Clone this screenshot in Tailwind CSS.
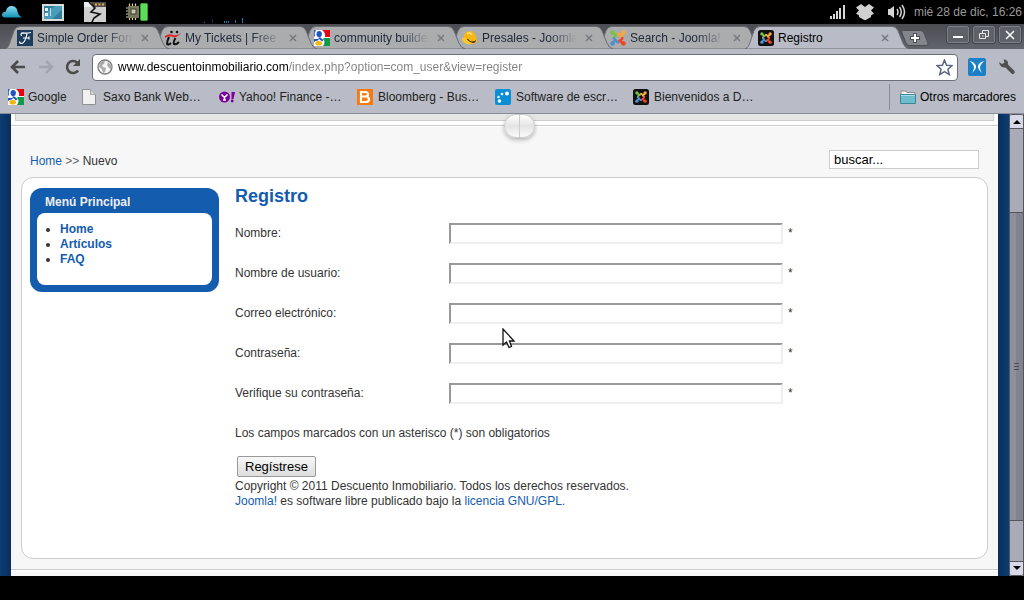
<!DOCTYPE html>
<html lang="es">
<head>
  <meta charset="UTF-8" />
  <meta name="viewport" content="width=device-width, initial-scale=1" />
  <title>Registro</title>
  <script src="https://cdn.jsdelivr.net/npm/@tailwindcss/browser@4"></script>
  <style>
    body {
      font-family: 'Liberation Sans', Arial, sans-serif;
    }
  </style>
</head>
<body class="h-screen flex flex-col overflow-hidden bg-black text-xs text-[#333]">

  <!-- Shared shapes -->
  <svg class="hidden">
    <symbol id="tab" viewBox="0 0 164 24" preserveAspectRatio="none">
      <path d="M0 24C3 23 4 20 5 17L9 5Q11 .5 15 .5H147Q151 .5 153 5L158 18Q160 23 164 24Z" />
    </symbol>
    <symbol id="google" viewBox="0 0 16 16">
      <rect width="16" height="16" fill="#fff" />
      <path d="M8 0H16V7H11Q12 3 8 0Z" fill="#e60012" />
      <path d="M10 8H16V16H9Q12 12 9 9Z" fill="#109a48" />
      <path d="M0 0H2Q0 3 1 6L0 7Z" fill="#2c63c8" />
      <path d="M0 9H5L4 10.500Q1 10.500 0 12Z" fill="#1f55b5" />
      <ellipse cx="5.200" cy="4" rx="2.700" ry="3.100" fill="#1e56c4" />
      <path d="M4 8Q6 6.500 7 8L9.500 10L8 11.500Z" fill="#1e56c4" />
      <ellipse cx="4.700" cy="13.300" rx="3.300" ry="2.300" fill="#f5b50f" />
    </symbol>
    <symbol id="joomla" viewBox="0 0 16 16">
      <g fill="none" stroke-width="2.500">
        <path d="M2.500 3L5.500 4.500M3.500 9L4 7L8.500 3.500" stroke="#7ac143" />
        <path d="M13 3L11.500 5.500M7 3.500L9 4L12.500 8.500" stroke="#f9a541" />
        <path d="M13 13L10.500 11.500M12.500 7L12 9L7.500 12.500" stroke="#f44321" />
        <path d="M3 13L4.500 10.500M9 12.500L7 12L3.500 7.500" stroke="#5091cd" />
      </g>
      <circle cx="2.500" cy="2.500" r="2.200" fill="#7ac143" />
      <circle cx="13.500" cy="2.500" r="2.200" fill="#f9a541" />
      <circle cx="13.500" cy="13.500" r="2.200" fill="#f44321" />
      <circle cx="2.500" cy="13.500" r="2.200" fill="#5091cd" />
    </symbol>
    <symbol id="joomla-dark" viewBox="0 0 16 16">
      <rect width="16" height="16" rx="2.500" fill="#111" />
      <use href="#joomla" x="2" y="2" width="12" height="12" />
    </symbol>
    <symbol id="close" viewBox="0 0 8 8">
      <path d="M1 1L7 7M7 1L1 7" stroke="#77797f" stroke-width="1.500" />
    </symbol>
  </svg>

  <!-- Desktop panel -->
  <header class="h-6 shrink-0 flex items-center justify-between text-[#999]">
    <div class="flex items-center gap-5">
      <svg class="ml-0.5 w-5 h-5" viewBox="0 0 20 20">
        <defs><linearGradient id="cloud" x2="0" y2="1"><stop stop-color="#8fdcf2" /><stop offset="1" stop-color="#1493b8" /></linearGradient></defs>
        <path d="M3 15.500Q-1 15 0 12Q1 9.500 4 9.500Q4.500 4 10 4Q15 4.500 15.500 9.500Q16 13 20 15.500Z" fill="url(#cloud)" />
      </svg>
      <svg class="w-[22px] h-5" viewBox="0 0 22 20">
        <rect y="2" width="22" height="17" fill="#d9dcd8" />
        <rect x="2" y="4" width="18" height="13" fill="#2f7f9b" />
        <path d="M2 17V12L13 4H20V8L10 17Z" fill="#4a9db8" />
        <path d="M3 6h3v3H3zM3 11h3v3H3z" fill="#e6f1f4" />
        <path d="M8.500 6V14" stroke="#bcdce6" />
      </svg>
      <svg class="w-[22px] h-5" viewBox="0 0 22 20">
        <rect width="22" height="20" fill="#cfcfcf" />
        <rect width="22" height="5" fill="#4d4d4d" />
        <path d="M0 0H7L9 5H0Z" fill="#ececec" />
        <path d="M11 1.500h2v2h-2zM14.500 1.500h2v2h-2zM18 1.500h2v2h-2z" fill="#e3a83c" />
        <path d="M5 0L11 6L7 10L16 12L10 16L8 20" fill="none" stroke="#111" stroke-width="1.600" />
      </svg>
      <svg class="w-[22px] h-5" viewBox="0 0 22 20">
        <path d="M3.500 1.500V18M6.500 1.500V18M9.500 1.500V18M0 6H13M0 9H13M0 12H13M0 15H13" stroke="#d5cf9a" stroke-width="1.200" />
        <rect x="2" y="4" width="11" height="12" fill="#77775b" />
        <rect x="5" y="7" width="5" height="5" fill="#c8c8b0" stroke="#3e3e30" />
        <rect x="14.500" y="1.500" width="7" height="17" rx="1" fill="#62d95d" stroke="#2ba42b" />
      </svg>
      <svg class="ml-9 w-10 h-6" viewBox="0 0 40 24">
        <path d="M.5 22V23M20.500 21V23M22.500 21V23M24.500 21V23M31.500 20V23M38.500 18V23" stroke="#1b76ad" />
        <path d="M8.500 19V23" stroke="#0b3048" />
      </svg>
    </div>
    <div class="flex items-center pr-0.5">
      <svg class="w-4 h-4" viewBox="0 0 16 16">
        <path d="M0 12h2v3H0zM3 10h2v5H3zM6 7h2v8H6zM9 4h2v11H9zM13 1h2v14h-2z" fill="#d6d6d6" />
      </svg>
      <svg class="ml-2.5 w-[18px] h-4" viewBox="0 0 18 16">
        <path d="M5 0L9 3L13 0L18 3.500L15 6.500L18 9.500L15 11.500V13L9 16.500L3 13V11.500L0 9.500L3 6.500L0 3.500Z" fill="#d0d0d0" />
      </svg>
      <svg class="ml-3.5 w-[19px] h-4" viewBox="0 0 19 16">
        <path d="M0 5H2L6 2V14L2 11H0Z" fill="#d6d6d6" />
        <path d="M9 5Q11 8 9 11M11.500 3Q15 8 11.500 13M14 1Q19 8 14 15" fill="none" stroke="#d6d6d6" stroke-width="1.500" />
      </svg>
      <time class="ml-[7px]">mié 28 de dic, 16:26</time>
    </div>
  </header>

  <!-- Tab strip -->
  <nav class="h-[26px] shrink-0 flex justify-between bg-linear-to-b from-[#4b4d53] to-[#62646b] pt-0.5 pl-[5px] border-b border-[#b9bcc6]">
    <div class="flex min-w-0">
      <div class="relative z-5 w-[164px] -mr-4 flex items-center pl-3 pr-5">
        <svg class="absolute inset-0 w-full h-full fill-[#abacae] stroke-[#696b72]"><use href="#tab" /></svg>
        <svg class="relative w-4 h-4 shrink-0" viewBox="0 0 16 16">
          <rect width="16" height="16" fill="#1d3d5c" />
          <path d="M4.500 6Q3 3 6 2.800Q9 3.500 14 2.500M10 3.500Q8.500 12 5 13.500Q2.500 13.500 2.500 11.500M6 8H12M12 6.500V9.500" fill="none" stroke="#fff" stroke-width="1.200" />
        </svg>
        <a href="#" class="relative ml-1 grow overflow-hidden whitespace-nowrap text-[#222b3c] [mask-image:linear-gradient(90deg,#000_70%,transparent)]">Simple Order Form</a>
        <button aria-label="Cerrar" class="relative ml-2"><svg class="w-2 h-2"><use href="#close" /></svg></button>
      </div>
      <div class="relative z-4 w-[164px] -mr-4 flex items-center pl-3 pr-5">
        <svg class="absolute inset-0 w-full h-full fill-[#abacae] stroke-[#696b72]"><use href="#tab" /></svg>
        <svg class="relative w-4 h-4 shrink-0" viewBox="0 0 16 16">
          <path d="M0 6Q4 3 8 5Q12 6 16 3Q12 8 8 7Q4 5 0 8Z" fill="#e0202a" />
          <path d="M4 7Q2 11 2 14Q3 15.500 6 13M10.500 8Q8 12 9 14Q11 15 14 12" fill="none" stroke="#111" stroke-width="2" />
          <circle cx="6.500" cy="2" r="1.300" fill="#111" /><circle cx="12" cy="2" r="1.300" fill="#111" />
        </svg>
        <a href="#" class="relative ml-1 grow overflow-hidden whitespace-nowrap text-[#222b3c] [mask-image:linear-gradient(90deg,#000_70%,transparent)]">My Tickets | Free Hosting</a>
        <button aria-label="Cerrar" class="relative ml-2"><svg class="w-2 h-2"><use href="#close" /></svg></button>
      </div>
      <div class="relative z-3 w-[164px] -mr-4 flex items-center pl-[13px] pr-5">
        <svg class="absolute inset-0 w-full h-full fill-[#abacae] stroke-[#696b72]"><use href="#tab" /></svg>
        <svg class="relative w-4 h-4 shrink-0"><use href="#google" /></svg>
        <a href="#" class="relative ml-1 grow overflow-hidden whitespace-nowrap text-[#222b3c] [mask-image:linear-gradient(90deg,#000_70%,transparent)]">community builder</a>
        <button aria-label="Cerrar" class="relative ml-2"><svg class="w-2 h-2"><use href="#close" /></svg></button>
      </div>
      <div class="relative z-2 w-[164px] -mr-4 flex items-center pl-[13px] pr-5">
        <svg class="absolute inset-0 w-full h-full fill-[#abacae] stroke-[#696b72]"><use href="#tab" /></svg>
        <svg class="relative w-4 h-4 shrink-0" viewBox="0 0 16 16">
          <path d="M2 9Q1 2 7 1Q13 1 14 7L15 10Q15 14 9 14Q4 13 2 9Z" fill="#f7b611" />
          <path d="M4 9Q6 8 8 11Q12 12 14 10Q14 13 10 13.500Q6 13 4 9Z" fill="#5a3d05" />
          <path d="M0 8Q0 13 7 14.500L12 13.500Q6 12 4 8Z" fill="#ffc928" />
          <path d="M5 4Q8 1.500 10 5" fill="none" stroke="#ffe68a" stroke-width="1.500" />
        </svg>
        <a href="#" class="relative ml-1 grow overflow-hidden whitespace-nowrap text-[#222b3c] [mask-image:linear-gradient(90deg,#000_70%,transparent)]">Presales - Joomla!</a>
        <button aria-label="Cerrar" class="relative ml-2"><svg class="w-2 h-2"><use href="#close" /></svg></button>
      </div>
      <div class="relative z-1 w-[164px] -mr-4 flex items-center pl-[13px] pr-5">
        <svg class="absolute inset-0 w-full h-full fill-[#abacae] stroke-[#696b72]"><use href="#tab" /></svg>
        <svg class="relative w-4 h-4 shrink-0"><use href="#joomla" /></svg>
        <a href="#" class="relative ml-1 grow overflow-hidden whitespace-nowrap text-[#222b3c] [mask-image:linear-gradient(90deg,#000_70%,transparent)]">Search - Joomla! Extensions</a>
        <button aria-label="Cerrar" class="relative ml-2"><svg class="w-2 h-2"><use href="#close" /></svg></button>
      </div>
      <div class="relative z-6 w-[164px] flex items-center pl-[13px] pr-5">
        <svg class="absolute inset-0 w-full h-full fill-[#b9bcc6] stroke-[#696b72]"><use href="#tab" /></svg>
        <svg class="relative w-4 h-4 shrink-0"><use href="#joomla-dark" /></svg>
        <a href="#" class="relative ml-1 grow overflow-hidden whitespace-nowrap text-black">Registro</a>
        <button aria-label="Cerrar" class="relative ml-2"><svg class="w-2 h-2"><use href="#close" /></svg></button>
      </div>
      <button aria-label="Nueva pestaña" class="-ml-2 self-center">
        <svg class="w-7 h-4" viewBox="0 0 28 16">
          <path d="M1.500 .5H19Q22 .5 23 3L27 13Q27.500 15.500 25 15.500H9Q6 15.500 5 13L1 3Q.5 1 1.500 .5Z" fill="#84868d" stroke="#4c4e54" />
          <path d="M14 3V13M9 8H19" stroke="#4c4e54" stroke-width="4" />
          <path d="M14 4V12M10 8H18" stroke="#fff" stroke-width="2" />
        </svg>
      </button>
    </div>
    <div class="flex gap-1 pr-[3px]">
      <button aria-label="Minimizar" class="w-[22px] h-[17px] rounded-xs border border-[#7e8087] bg-[#5f6168] outline outline-[#43454b] flex items-center justify-center">
        <svg class="w-3 h-3" viewBox="0 0 12 12"><path d="M1 8H11" stroke="#fff" stroke-width="2" /></svg>
      </button>
      <button aria-label="Restaurar" class="w-[22px] h-[17px] rounded-xs border border-[#7e8087] bg-[#5f6168] outline outline-[#43454b] flex items-center justify-center">
        <svg class="w-3 h-3" viewBox="0 0 12 12"><path d="M4.500 4V1.500H10.500V7.500H8M1.500 4.500H7.500V9.500H1.500ZM4 7H5.500" fill="none" stroke="#e6e6e6" /></svg>
      </button>
      <button aria-label="Cerrar ventana" class="w-[22px] h-[17px] rounded-xs border border-[#7e8087] bg-[#5f6168] outline outline-[#43454b] flex items-center justify-center">
        <svg class="w-3 h-3" viewBox="0 0 12 12"><path d="M2 2L10 10M10 2L2 10" stroke="#fff" stroke-width="1.500" /></svg>
      </button>
    </div>
  </nav>

  <!-- Toolbar -->
  <div class="h-[34px] shrink-0 flex items-center gap-2.5 bg-[#b9bcc6] pl-2.5 pr-2">
    <button aria-label="Atrás" class="mr-0.5"><svg class="w-4 h-4" viewBox="0 0 16 16"><path d="M8 2L2 8L8 14M2.500 8H15" fill="none" stroke="#4b4b4b" stroke-width="2.600" /></svg></button>
    <button aria-label="Adelante"><svg class="w-4 h-4" viewBox="0 0 16 16"><path d="M8 2L14 8L8 14M13.500 8H1" fill="none" stroke="#a3a5ae" stroke-width="2.600" /></svg></button>
    <button aria-label="Recargar"><svg class="w-[18px] h-4" viewBox="0 0 18 16"><path d="M14 11.500A6 6 0 1 1 13 3.500" fill="none" stroke="#4b4b4b" stroke-width="2.600" /><path d="M16 0V7H9Z" fill="#4b4b4b" /></svg></button>
    <div class="grow h-[27px] flex items-center gap-[5px] bg-white border border-[#6c6f7a] rounded-sm px-1">
      <svg class="w-4 h-4 shrink-0" viewBox="0 0 16 16">
        <circle cx="8" cy="8" r="7" fill="#f4f4f4" stroke="#7b7b7b" stroke-width="1.300" />
        <path d="M3 3Q6 1 8 2L7 5L5 6L6 8L9 9L8 13L6 14L5 10L2 8ZM11 3L14 6V10L12 9L10 6Z" fill="#aaa" />
      </svg>
      <input type="text" aria-label="Dirección" value="www.descuentoinmobiliario.com/index.php?option=com_user&amp;view=register"
        class="grow min-w-0 outline-none text-transparent bg-clip-text bg-[linear-gradient(90deg,#000_171px,#808080_171px)]" />
      <button aria-label="Añadir a marcadores"><svg class="w-[17px] h-[17px]" viewBox="0 0 17 17"><path d="M8.500 1L10.600 6.200L16 6.600L11.900 10.200L13.200 15.600L8.500 12.700L3.800 15.600L5.100 10.200L1 6.600L6.400 6.200Z" fill="#fff" stroke="#5b6683" stroke-width="1.500" /></svg></button>
    </div>
    <button aria-label="Extensión" class="mr-0.5"><svg class="w-[18px] h-[18px]" viewBox="0 0 18 18">
      <rect width="18" height="18" rx="2" fill="#1b80c6" />
      <path d="M1.500 3Q7 4 8 8Q8.500 11 4 15Q7 10 5.500 7.500Q4.500 5 1.500 3ZM16.500 3Q11 4 10 8Q9.500 11 14 15Q11 10 12.500 7.500Q13.500 5 16.500 3Z" fill="#fff" />
    </svg></button>
    <button aria-label="Herramientas"><svg class="w-[18px] h-[18px]" viewBox="0 0 18 18">
      <path d="M1 4L4 6L6.500 4.500L5.500 1.500Q10.500 1.500 10 6.500L16.500 13Q17.500 15 15.500 16Q14.500 16.500 13.500 15.500L7.500 9.500Q2 10 1 4Z" fill="#505050" />
    </svg></button>
  </div>

  <!-- Bookmarks bar -->
  <div class="h-[30px] shrink-0 flex items-center justify-between bg-[#b9bcc6] border-b border-[#8a8c97] px-2 pb-1 text-[#222]">
    <div class="flex items-center gap-3.5 whitespace-nowrap">
      <a href="#" class="flex items-center gap-1 w-[59px]"><svg class="w-4 h-4"><use href="#google" /></svg>Google</a>
      <a href="#" class="flex items-center gap-1.5 w-[124px]">
        <svg class="w-4 h-4" viewBox="0 0 16 16"><path d="M1.500 .5H9.500L14.500 5.500V15.500H1.500Z" fill="#f1f1f1" stroke="#8f8f8f" /><path d="M9.500 .5V5.500H14.500" fill="#d5d5d5" stroke="#a5a5a5" /></svg>Saxo Bank Web…
      </a>
      <a href="#" class="flex items-center gap-1 w-[124px]">
        <svg class="w-4 h-4" viewBox="0 0 16 16">
          <circle cx="5.500" cy="8" r="5.500" fill="#7b0099" />
          <path d="M2.500 5.500L5.500 8.500L8.500 5.500M5.500 8.500V11M4 11H7" fill="none" stroke="#fff" stroke-width="1.500" />
          <path d="M12.500 3H16L14.500 10H12.500Z" fill="#7b0099" /><circle cx="13.200" cy="12" r="1.400" fill="#7b0099" />
        </svg>Yahoo! Finance -…
      </a>
      <a href="#" class="flex items-center gap-[5px] w-[124px]">
        <svg class="w-4 h-4" viewBox="0 0 16 16">
          <rect width="16" height="16" fill="#f87a0c" />
          <path d="M4 3H8Q11 3 11 5.500Q11 7.500 8 7.500H4ZM4 7.500H8.500Q12 7.500 12 10.200Q12 13 8.500 13H4Z" fill="none" stroke="#fff" stroke-width="2.200" />
        </svg>Bloomberg - Bus…
      </a>
      <a href="#" class="flex items-center gap-[5px] w-[124px]">
        <svg class="w-4 h-4" viewBox="0 0 16 16">
          <rect width="16" height="16" rx="2" fill="#0a8fd6" />
          <g fill="#fff"><circle cx="12" cy="4.500" r="2" /><circle cx="7" cy="5" r="1.300" /><circle cx="3.500" cy="8" r="1.200" /><circle cx="4.500" cy="12" r="1.800" /></g>
        </svg>Software de escr…
      </a>
      <a href="#" class="flex items-center gap-[5px] w-[124px]"><svg class="w-4 h-4"><use href="#joomla-dark" /></svg>Bienvenidos a D…</a>
    </div>
    <a href="#" class="flex items-center gap-1 border-l border-[#8a8c97] pl-2.5 h-[26px] text-black">
      <svg class="w-4 h-4" viewBox="0 0 16 16">
        <path d="M1 2H6L7 3.500H15V8H1Z" fill="#f5f5f5" stroke="#8c8c8c" />
        <path d="M.5 5.500H15.500V14.500H.5Z" fill="#6dbccb" stroke="#3b8796" />
        <path d="M1 6.500H15" stroke="#a8dde7" />
      </svg>Otros marcadores
    </a>
  </div>

  <!-- Page -->
  <div class="grow min-h-0 flex">
    <main class="relative grow min-w-0 overflow-hidden flex bg-[#0c3a6e]">
      <div class="w-[11px] shrink-0 bg-linear-to-r from-[#0d3d73] to-[#0a2f5a]"></div>
      <div class="grow min-w-0 bg-[#f7f7f7]">
        <div class="h-3 bg-white border-b border-[#ccc] px-1">
          <div class="h-[7px] bg-[#e6e6e6] border border-t-0 border-[#ccc]"></div>
        </div>
        <div class="h-[51px] border-t border-white pt-[23px] px-[19px] flex items-start justify-between">
          <p class="pt-0.5 leading-[18px] text-[#666]"><a href="#" class="text-[#135cae]">Home</a> &gt;&gt; <span class="text-[#333]">Nuevo</span></p>
          <input type="text" aria-label="buscar" value="buscar..." class="w-[150px] h-[19px] bg-white border border-[#ccc] px-1 text-[13px] text-black outline-none" />
        </div>

        <div class="mx-2.5 min-h-[382px] flex items-start gap-4 bg-white border border-[#ccc] rounded-xl px-2 pt-2.5">
          <aside class="w-[189px] shrink-0 rounded-xl bg-[#135cae] px-[7px] pb-[7px] font-bold">
            <h3 class="h-[25px] pl-2 leading-7 text-[#eee]">Menú Principal</h3>
            <ul class="h-[72px] rounded-lg bg-white pt-[9px] pl-[23px] leading-[15px] list-disc list-outside text-[#333]">
              <li><a href="#" class="text-[#135cae]">Home</a></li>
              <li><a href="#" class="text-[#135cae]">Artículos</a></li>
              <li><a href="#" class="text-[#135cae]">FAQ</a></li>
            </ul>
          </aside>

          <section class="grow min-w-0 leading-[15px]">
            <h1 class="h-[25px] text-lg leading-4 font-bold text-[#135cae]">Registro</h1>
            <form>
              <div class="h-10 flex items-center">
                <label for="name" class="w-[214px]">Nombre:</label>
                <input id="name" type="text" class="w-[334px] h-[21px] mr-[5px] bg-white border-2 border-t-[#999] border-l-[#999] border-r-[#eee] border-b-[#eee] px-1" />*
              </div>
              <div class="h-10 flex items-center">
                <label for="username" class="w-[214px]">Nombre de usuario:</label>
                <input id="username" type="text" class="w-[334px] h-[21px] mr-[5px] bg-white border-2 border-t-[#999] border-l-[#999] border-r-[#eee] border-b-[#eee] px-1" />*
              </div>
              <div class="h-10 flex items-center">
                <label for="email" class="w-[214px]">Correo electrónico:</label>
                <input id="email" type="text" class="w-[334px] h-[21px] mr-[5px] bg-white border-2 border-t-[#999] border-l-[#999] border-r-[#eee] border-b-[#eee] px-1" />*
              </div>
              <div class="h-10 flex items-center">
                <label for="password" class="w-[214px]">Contraseña:</label>
                <input id="password" type="password" class="w-[334px] h-[21px] mr-[5px] bg-white border-2 border-t-[#999] border-l-[#999] border-r-[#eee] border-b-[#eee] px-1" />*
              </div>
              <div class="h-10 flex items-center">
                <label for="password2" class="w-[214px]">Verifique su contraseña:</label>
                <input id="password2" type="password" class="w-[334px] h-[21px] mr-[5px] bg-white border-2 border-t-[#999] border-l-[#999] border-r-[#eee] border-b-[#eee] px-1" />*
              </div>
              <p class="h-10 flex items-center">Los campos marcados con un asterisco (*) son obligatorios</p>
              <button type="submit" class="block ml-0.5 mt-[3px] h-[21px] px-[7px] border border-[#999] rounded-xs bg-linear-to-b from-[#f8f8f8] to-[#ddd] text-[13px] text-black">Regístrese</button>
            </form>
            <p class="mt-0.5">Copyright © 2011 Descuento Inmobiliario. Todos los derechos reservados.</p>
            <p><a href="#" class="text-[#135cae]">Joomla!</a> es software libre publicado bajo la <a href="#" class="text-[#135cae]">licencia GNU/GPL.</a></p>
          </section>
        </div>
        <div class="mt-2.5 h-px bg-[#ccc]"></div>
        <div class="h-px bg-white"></div>
      </div>
      <div class="w-[11px] shrink-0 bg-linear-to-r from-[#0a2f5a] to-[#0d3d73]"></div>

      <!-- Slide panel handle -->
      <div class="absolute top-0 left-[504px] w-[31px] h-6 rounded-full border border-[#ccc] bg-linear-to-b from-white via-[#e4e4e4] to-[#fafafa] shadow-[0_2px_4px_#0004] flex justify-center">
        <div class="w-px bg-[#ccc]"></div>
      </div>
    </main>

    <!-- Scrollbar -->
    <div class="w-[15px] shrink-0 flex flex-col bg-[#a9abb7] border-x border-[#55565c]">
      <div class="h-[15px] flex items-center justify-center rounded-t-xs bg-[#d8d9e8] border-y border-[#55565c]">
        <svg class="w-2 h-1" viewBox="0 0 8 4"><path d="M4 0L8 4H0Z" /></svg>
      </div>
      <div class="flex-[83]"></div>
      <div class="flex-[309] flex items-center justify-center border-y border-[#55565c] bg-linear-to-r from-[#8e8f9d] from-50% to-[#81828f] to-50%">
        <svg class="w-[5px] h-[7px]" viewBox="0 0 5 7"><path d="M0 .5H5M0 3.500H5M0 6.500H5" stroke="#4b4c52" /></svg>
      </div>
      <div class="flex-[40]"></div>
      <div class="h-[15px] flex items-center justify-center rounded-b-xs bg-[#d8d9e8] border-y border-[#55565c]">
        <svg class="w-2 h-1" viewBox="0 0 8 4"><path d="M0 0H8L4 4Z" /></svg>
      </div>
    </div>
  </div>

  <footer class="h-6 shrink-0 bg-black"></footer>

  <!-- Mouse pointer -->
  <svg class="absolute left-[502px] top-[328px] w-[14px] h-[21px]" viewBox="0 0 14 21">
    <path d="M1 1V17L4.500 14L7 19.500L9.500 18.500L7.500 13H12Z" fill="#fff" stroke="#111" stroke-width="1.300" />
  </svg>
</body>
</html>
